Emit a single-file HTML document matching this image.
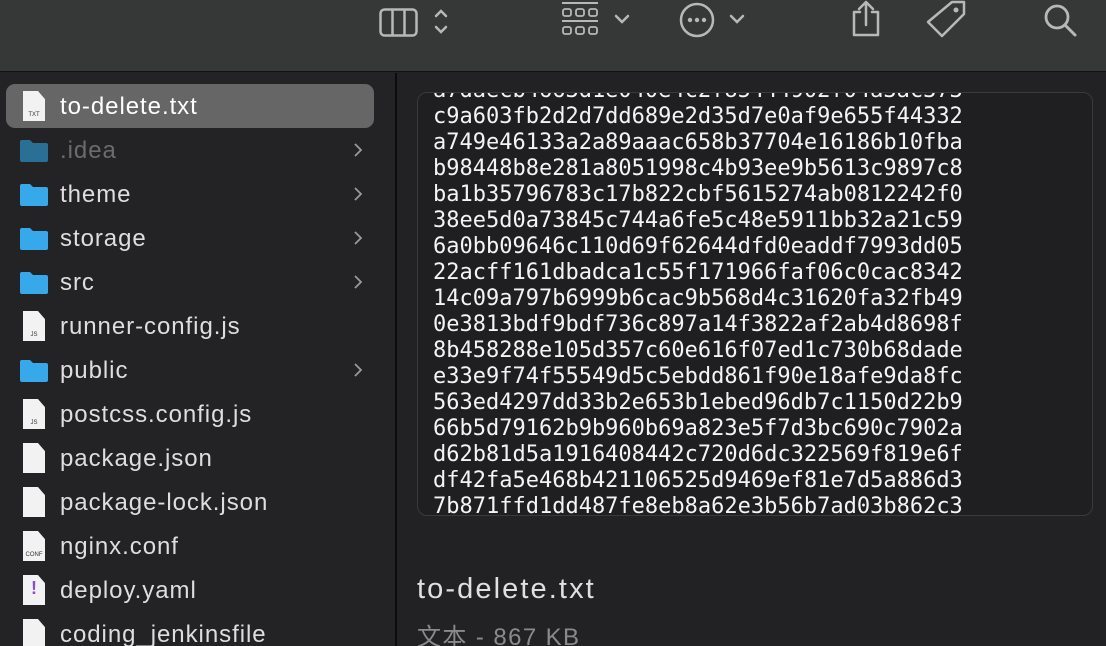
<!DOCTYPE html>
<html><head><meta charset="utf-8"><style>
*{margin:0;padding:0;box-sizing:border-box}
html,body{width:1106px;height:646px;overflow:hidden}
body{background:#222224;font-family:"Liberation Sans","Noto Sans CJK SC",sans-serif;position:relative}
.tb{position:absolute;left:0;top:0;width:1106px;height:72px;background:#363737;border-bottom:1px solid #111}
.side{position:absolute;left:0;top:73px;width:395px;height:573px;background:#232325}
.div{position:absolute;left:395px;top:73px;width:2px;height:573px;background:#0c0c0c}
.main{position:absolute;left:397px;top:73px;width:709px;height:573px;background:#222224}
.row{position:absolute;left:6px;width:368px;height:44px}
.row .t{position:absolute;left:54px;top:9px;font-size:24px;color:#dedede;letter-spacing:0.95px}
.sel{background:#666666;border-radius:9px}
.sel .t{color:#fff}
.chev{position:absolute;right:10px;top:13px}
.fold{position:absolute;left:14px;top:12px;width:28px;height:22px}
.doc{position:absolute;left:17px;top:7px;width:22px;height:30px;background:#f2f2f2;clip-path:polygon(0 0,68% 0,100% 27%,100% 100%,0 100%)}
.doc span{position:absolute;bottom:3px;width:100%;text-align:center;font-size:6px;color:#333}
.box{position:absolute;left:417px;top:92px;width:676px;height:424px;border:1px solid #3a3a3c;border-radius:10px;background:#1f1f21;overflow:hidden}
.txt{position:absolute;left:15px;top:-15px;font-family:"DejaVu Sans Mono",monospace;font-size:22px;line-height:26px;color:#f4f4f4;white-space:pre}
.title{position:absolute;left:417px;top:573px;font-size:29px;color:#e0e0e0;letter-spacing:2.1px}
.sub{position:absolute;left:417px;top:617px;font-size:24px;color:#8a8a8a;letter-spacing:1.4px}
svg{position:absolute}
</style></head><body>
<div class="tb">
<svg style="left:378px;top:4px" width="100" height="36" viewBox="0 0 100 36"><rect x="2.5" y="5.5" width="36" height="26" rx="4" fill="none" stroke="#b8b8b8" stroke-width="2.5"/><line x1="14.5" y1="6" x2="14.5" y2="31" stroke="#b8b8b8" stroke-width="2.5"/><line x1="26.5" y1="6" x2="26.5" y2="31" stroke="#b8b8b8" stroke-width="2.5"/><path d="M58 12l5-5 5 5M58 23l5 5 5-5" fill="none" stroke="#b8b8b8" stroke-width="2.5" stroke-linecap="round"/></svg>
<svg style="left:560px;top:0px" width="75" height="40" viewBox="0 0 75 40"><line x1="2" y1="3" x2="38" y2="3" stroke="#b8b8b8" stroke-width="2"/><line x1="2" y1="21" x2="38" y2="21" stroke="#b8b8b8" stroke-width="2"/><g fill="none" stroke="#b8b8b8" stroke-width="1.8"><rect x="3" y="9" width="8" height="7" rx="2"/><rect x="16" y="9" width="8" height="7" rx="2"/><rect x="29" y="9" width="8" height="7" rx="2"/><rect x="3" y="27" width="8" height="7" rx="2"/><rect x="16" y="27" width="8" height="7" rx="2"/><rect x="29" y="27" width="8" height="7" rx="2"/></g><path d="M56 16l6 6 6-6" fill="none" stroke="#b8b8b8" stroke-width="2.5" stroke-linecap="round"/></svg>
<svg style="left:678px;top:0px" width="75" height="40" viewBox="0 0 75 40"><circle cx="19" cy="20" r="16" fill="none" stroke="#b8b8b8" stroke-width="2.5"/><circle cx="12" cy="20" r="2.2" fill="#b8b8b8"/><circle cx="19" cy="20" r="2.2" fill="#b8b8b8"/><circle cx="26" cy="20" r="2.2" fill="#b8b8b8"/><path d="M53 16l6 6 6-6" fill="none" stroke="#b8b8b8" stroke-width="2.5" stroke-linecap="round"/></svg>
<svg style="left:845px;top:0px" width="40" height="40" viewBox="0 0 40 40"><path d="M15 12H9v23h24V12h-6M21 25V2M14 9l7-7 7 7" fill="none" stroke="#b8b8b8" stroke-width="2.5" stroke-linecap="round" stroke-linejoin="round"/></svg>
<svg style="left:922px;top:0px" width="46" height="40" viewBox="0 0 46 40"><path d="M30 2h12v12L20 36 6 22z" fill="none" stroke="#b8b8b8" stroke-width="2.5" stroke-linejoin="round"/><circle cx="34" cy="10" r="2.5" fill="#b8b8b8"/></svg>
<svg style="left:1040px;top:0px" width="40" height="40" viewBox="0 0 40 40"><circle cx="17" cy="17" r="11" fill="none" stroke="#b8b8b8" stroke-width="2.8"/><path d="M25 25l10 10" stroke="#b8b8b8" stroke-width="3" stroke-linecap="round"/></svg>
</div>
<div class="side">
<div class="row sel" style="top:11px"><div class="doc"><span>TXT</span></div><div class="t">to-delete.txt</div></div>
<div class="row" style="top:55px"><svg class="fold" viewBox="0 0 28 22"><path d="M0 2q0-2 2-2h8l3 3h13q2 0 2 2v15q0 2-2 2H2q-2 0-2-2z" fill="#2a6f95"/></svg><div class="t" style="color:#6b6b6b">.idea</div><svg class="chev" width="12" height="18"><path d="M3 3l6 6-6 6" fill="none" stroke="#9a9a9a" stroke-width="1.8"/></svg></div>
<div class="row" style="top:99px"><svg class="fold" viewBox="0 0 28 22"><path d="M0 2q0-2 2-2h8l3 3h13q2 0 2 2v15q0 2-2 2H2q-2 0-2-2z" fill="#37a9eb"/></svg><div class="t">theme</div><svg class="chev" width="12" height="18"><path d="M3 3l6 6-6 6" fill="none" stroke="#9a9a9a" stroke-width="1.8"/></svg></div>
<div class="row" style="top:143px"><svg class="fold" viewBox="0 0 28 22"><path d="M0 2q0-2 2-2h8l3 3h13q2 0 2 2v15q0 2-2 2H2q-2 0-2-2z" fill="#37a9eb"/></svg><div class="t">storage</div><svg class="chev" width="12" height="18"><path d="M3 3l6 6-6 6" fill="none" stroke="#9a9a9a" stroke-width="1.8"/></svg></div>
<div class="row" style="top:187px"><svg class="fold" viewBox="0 0 28 22"><path d="M0 2q0-2 2-2h8l3 3h13q2 0 2 2v15q0 2-2 2H2q-2 0-2-2z" fill="#37a9eb"/></svg><div class="t">src</div><svg class="chev" width="12" height="18"><path d="M3 3l6 6-6 6" fill="none" stroke="#9a9a9a" stroke-width="1.8"/></svg></div>
<div class="row" style="top:231px"><div class="doc"><span>JS</span></div><div class="t">runner-config.js</div></div>
<div class="row" style="top:275px"><svg class="fold" viewBox="0 0 28 22"><path d="M0 2q0-2 2-2h8l3 3h13q2 0 2 2v15q0 2-2 2H2q-2 0-2-2z" fill="#37a9eb"/></svg><div class="t">public</div><svg class="chev" width="12" height="18"><path d="M3 3l6 6-6 6" fill="none" stroke="#9a9a9a" stroke-width="1.8"/></svg></div>
<div class="row" style="top:319px"><div class="doc"><span>JS</span></div><div class="t">postcss.config.js</div></div>
<div class="row" style="top:363px"><div class="doc"></div><div class="t">package.json</div></div>
<div class="row" style="top:407px"><div class="doc"></div><div class="t">package-lock.json</div></div>
<div class="row" style="top:451px"><div class="doc"><span>CONF</span></div><div class="t">nginx.conf</div></div>
<div class="row" style="top:495px"><div class="doc"><span style="bottom:6px;font-size:18px;font-weight:bold;color:#8a4fc9">!</span></div><div class="t">deploy.yaml</div></div>
<div class="row" style="top:539px"><div class="doc"></div><div class="t">coding_jenkinsfile</div></div>
</div>
<div class="div"></div>
<div class="main"></div>
<div class="box"><div class="txt">a7daecb4663d1e040e4c2f85444902f04a3ac373
c9a603fb2d2d7dd689e2d35d7e0af9e655f44332
a749e46133a2a89aaac658b37704e16186b10fba
b98448b8e281a8051998c4b93ee9b5613c9897c8
ba1b35796783c17b822cbf5615274ab0812242f0
38ee5d0a73845c744a6fe5c48e5911bb32a21c59
6a0bb09646c110d69f62644dfd0eaddf7993dd05
22acff161dbadca1c55f171966faf06c0cac8342
14c09a797b6999b6cac9b568d4c31620fa32fb49
0e3813bdf9bdf736c897a14f3822af2ab4d8698f
8b458288e105d357c60e616f07ed1c730b68dade
e33e9f74f55549d5c5ebdd861f90e18afe9da8fc
563ed4297dd33b2e653b1ebed96db7c1150d22b9
66b5d79162b9b960b69a823e5f7d3bc690c7902a
d62b81d5a1916408442c720d6dc322569f819e6f
df42fa5e468b421106525d9469ef81e7d5a886d3
7b871ffd1dd487fe8eb8a62e3b56b7ad03b862c3</div></div>
<div class="title">to-delete.txt</div>
<div class="sub">文本 - 867 KB</div>
</body></html>
